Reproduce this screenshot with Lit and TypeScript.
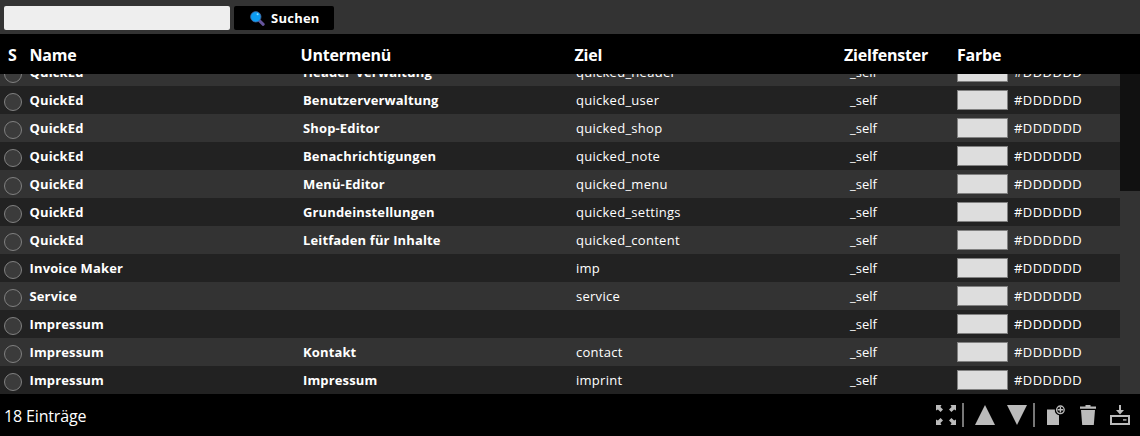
import { LitElement, html, css, svg } from "lit";
import { customElement } from "lit/decorators.js";

interface Entry {
  name: string;
  sub: string;
  target: string;
}

const entries: Entry[] = [
  { name: "QuickEd", sub: "Header-Verwaltung", target: "quicked_header" },
  { name: "QuickEd", sub: "Benutzerverwaltung", target: "quicked_user" },
  { name: "QuickEd", sub: "Shop-Editor", target: "quicked_shop" },
  { name: "QuickEd", sub: "Benachrichtigungen", target: "quicked_note" },
  { name: "QuickEd", sub: "Menü-Editor", target: "quicked_menu" },
  { name: "QuickEd", sub: "Grundeinstellungen", target: "quicked_settings" },
  { name: "QuickEd", sub: "Leitfaden für Inhalte", target: "quicked_content" },
  { name: "Invoice Maker", sub: "", target: "imp" },
  { name: "Service", sub: "", target: "service" },
  { name: "Impressum", sub: "", target: "" },
  { name: "Impressum", sub: "Kontakt", target: "contact" },
  { name: "Impressum", sub: "Impressum", target: "imprint" },
];

const arrowPath = "M0 0H5.5L4.4 1.9L7 4.6L4.6 7L1.9 4.4L0 5.5Z";

@customElement("app-root")
export class AppRoot extends LitElement {
  static styles = css`
    :host {
      display: flex;
      flex-direction: column;
      height: 436px;
      overflow: hidden;
      background: #333;
      color: #fff;
      font-family: "Open Sans", "Noto Sans", sans-serif;
      font-size: 13px;
    }
    * {
      box-sizing: border-box;
    }
    .search {
      display: flex;
      gap: 4px;
      height: 34px;
      padding: 6px 4px 4px;
      flex: none;
    }
    .field {
      width: 226px;
      height: 24px;
      padding: 0 4px;
      border: 0;
      border-radius: 2px;
      background: #eee;
      outline: 0;
    }
    .button {
      display: flex;
      align-items: center;
      gap: 6px;
      width: 100px;
      height: 24px;
      padding: 0 0 0 16px;
      border: 0;
      border-radius: 2px;
      background: #000;
      color: #fff;
      font: 700 13px "Open Sans", sans-serif;
      letter-spacing: 0.25px;
      white-space: nowrap;
    }
    .head,
    .row {
      display: grid;
      flex: none;
      align-items: center;
      white-space: nowrap;
    }
    .head {
      grid-template-columns: 21.5px 271px 274px 269.5px 113px 1fr;
      height: 40px;
      padding: 2px 0 0 8px;
      background: #000;
      font-size: 16px;
      line-height: 20px;
      font-weight: 700;
      letter-spacing: -0.2px;
    }
    .body {
      display: flex;
      height: 320px;
      flex: none;
    }
    .list {
      display: flex;
      flex-direction: column;
      justify-content: flex-end;
      width: 1120px;
      height: 320px;
      overflow: hidden;
    }
    .row {
      grid-template-columns: 25.5px 273.5px 273px 274px 107px 57px 1fr;
      height: 28px;
      padding-left: 4px;
      background: #333;
    }
    .row:nth-child(even) {
      background: #222;
    }
    .strong {
      font-weight: 700;
      letter-spacing: 0.14px;
    }
    .target {
      letter-spacing: 0.27px;
    }
    .hex {
      letter-spacing: 0.45px;
    }
    .radio {
      width: 18px;
      height: 18px;
      margin-top: 4px;
      border: 1px solid #808080;
      border-radius: 50%;
      background: #3b3b3b;
    }
    .swatch {
      width: 51px;
      height: 20px;
      border: 1px solid #808080;
      background: #ddd;
    }
    .track {
      width: 20px;
      background: #111;
      padding-top: 117px;
    }
    .thumb {
      height: 203px;
      background: #333;
    }
    .foot {
      display: flex;
      justify-content: space-between;
      align-items: center;
      height: 42px;
      padding: 0 10px 0 4px;
      background: #000;
      font-size: 16px;
      flex: none;
    }
    .count {
      padding-top: 2px;
      letter-spacing: -0.15px;
    }
    .tools {
      display: flex;
      align-items: center;
    }
    .tools svg {
      display: block;
      width: 20px;
      height: 20px;
      fill: #bbb;
    }
    .tools .gap {
      margin-left: 12px;
    }
    .bar {
      width: 2px;
      height: 24px;
      background: #777;
      margin: 0 11px 0 6px;
    }
  `;

  render() {
    return html`
      <div class="search">
        <input class="field" />
        <button class="button">
          <svg width="15" height="15" viewBox="0 0 15 15">
            <path d="M9.6 9.8L13.2 13.3" stroke="#65549c" stroke-width="3" stroke-linecap="round" />
            <circle cx="5.8" cy="5.8" r="5.2" fill="#0c9cf2" stroke="#45649c" stroke-width=".8" />
            <circle cx="7.6" cy="3.2" r="1" fill="#8be0ff" />
          </svg>
          <span class="caption">Suchen</span>
        </button>
      </div>
      <div class="head">
        <div>S</div>
        <div>Name</div>
        <div>Untermenü</div>
        <div>Ziel</div>
        <div>Zielfenster</div>
        <div>Farbe</div>
      </div>
      <div class="body">
        <div class="list">
          ${entries.map(
            (e) => html`<div class="row">
              <div class="radio"></div>
              <div class="strong">${e.name}</div>
              <div class="strong">${e.sub}</div>
              <div class="target">${e.target}</div>
              <div class="self">_self</div>
              <div class="swatch"></div>
              <div class="hex">#DDDDDD</div>
            </div>`
          )}
        </div>
        <div class="track"><div class="thumb"></div></div>
      </div>
      <div class="foot">
        <div class="count">18 Einträge</div>
        <div class="tools">
          <svg viewBox="0 0 20 20">
            ${[
              "",
              "translate(20 0) scale(-1 1)",
              "translate(0 20) scale(1 -1)",
              "translate(20 20) scale(-1 -1)",
            ].map((t) => svg`<path d=${arrowPath} transform=${t} />`)}
          </svg>
          <div class="bar"></div>
          <svg viewBox="0 0 20 20"><path d="M10 0L20 20H0Z" /></svg>
          <svg class="gap" viewBox="0 0 20 20"><path d="M0 0H20L10 20Z" /></svg>
          <div class="bar"></div>
          <svg viewBox="0 0 20 20">
            <path d="M1 4.5H8.8A5.8 5.8 0 0 0 13 10.3V20H1Z" />
            <circle cx="14.4" cy="4.8" r="3.8" fill="none" stroke="#bbb" stroke-width="1.3" />
            <path d="M13.7 2H15.1V4.1H17.2V5.5H15.1V7.6H13.7V5.5H11.6V4.1H13.7Z" />
          </svg>
          <svg class="gap" viewBox="0 0 20 20">
            <path d="M2 1.5H7.5V0H12.5V1.5H18V3.7H2ZM3 5H17L15.8 20H4.2Z" />
          </svg>
          <svg class="gap" viewBox="0 0 20 20">
            <path d="M9 0H11V5H14L10 9.5L6 5H9Z" />
            <path d="M1 11H19V19H1Z" fill="none" stroke="#bbb" stroke-width="2" />
            <path d="M13 14.2H16.5V15.6H13Z" />
          </svg>
        </div>
      </div>
    `;
  }
}
